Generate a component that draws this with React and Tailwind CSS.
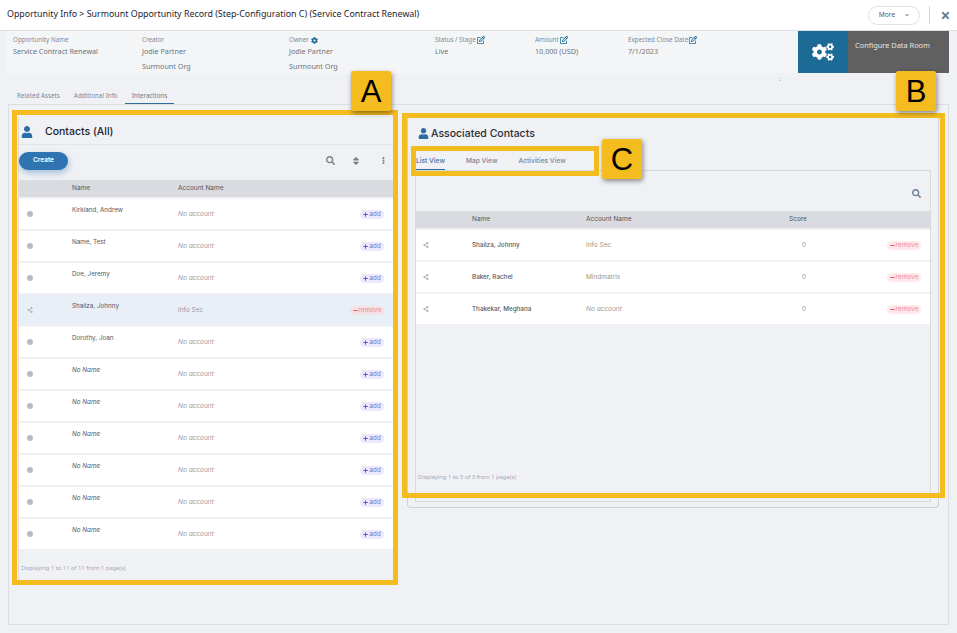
import React from 'react';
import { FaCogs, FaUser, FaSearch, FaEllipsisV, FaSort, FaShareAlt, FaTimes, FaCog, FaPlus, FaMinus, FaChevronDown } from 'react-icons/fa';
import { FaRegPenToSquare } from 'react-icons/fa6';

const plex = 'font-["Noto_Sans",sans-serif]';
const inter = 'font-["Inter",sans-serif]';

const contacts = [
    { name: 'Kirkland, Andrew' },
    { name: 'Name, Test' },
    { name: 'Doe, Jeremy' },
    { name: 'Shailza, Johnny', account: 'Info Sec', linked: true },
    { name: 'Dorothy, Joan' },
    { name: 'No Name' },
    { name: 'No Name' },
    { name: 'No Name' },
    { name: 'No Name' },
    { name: 'No Name' },
    { name: 'No Name' },
];

const associated = [
    { name: 'Shailza, Johnny', account: 'Info Sec' },
    { name: 'Baker, Rachel', account: 'Mindmatrix' },
    { name: 'Thakekar, Meghana' },
];

const AddPill = () => (
    <span className="flex h-[9px] w-[24px] items-center justify-center gap-[1px] rounded-full bg-[#ece9fb] text-[6.5px] leading-[9px] text-[#7a72dc]">
        <FaPlus className="h-[5px] w-[5px] text-[#5b50d6]" /><span>add</span>
    </span>
);

const RemovePill = ({ tint }) => (
    <span className={`flex h-[9px] w-[34px] items-center justify-center gap-[1px] rounded-full text-[6.5px] leading-[9px] text-[#ee8a94] ${tint}`}>
        <FaMinus className="h-[5px] w-[5px] text-[#f0505f]" /><span>remove</span>
    </span>
);

const EditIcon = () => <FaRegPenToSquare className="ml-[1px] inline h-[8px] w-[8px] align-baseline text-[#1e6a94]" />;

const Field = ({ label, icon, value, second }) => (
    <div className={`${plex} text-[#6a7480]`}>
        <div className="flex h-[10px] items-center text-[6.3px] leading-none text-[#7f8a9b]">{label}{icon}</div>
        <div className="mt-[1px] h-[10px] text-[7.2px] leading-[10px]">{value}</div>
        {second && <div className="mt-[5px] h-[10px] text-[7.2px] leading-[10px]">{second}</div>}
    </div>
);

const ContactRow = ({ contact }) => {
    const noName = contact.name === 'No Name';
    return (
        <div className={`mb-[2px] grid h-[30px] grid-cols-[53px_106px_1fr_auto] items-center pr-[9px] ${inter} ${contact.linked ? 'bg-[#e9eff6]' : 'bg-white'}`}>
            <div className="pl-[8px]">
                {contact.linked
                    ? <FaShareAlt className="h-[6px] w-[6px] text-[#b5b8c0]" />
                    : <div className="h-[6px] w-[6px] rounded-full bg-[#b9bcc4]" />}
            </div>
            <div className={`-mt-[7px] text-[6.3px] text-[#55575e] ${noName ? 'italic' : ''}`}>{contact.name}</div>
            <div className={`mt-[1px] text-[6.5px] text-[#9a9ca6] ${contact.account ? '' : 'italic'}`}>{contact.account || 'No account'}</div>
            {contact.linked ? <RemovePill tint="bg-[#f3e1e6]" /> : <AddPill />}
        </div>
    );
};

const AssociatedRow = ({ contact }) => (
    <div className={`mb-[2px] grid h-[30px] grid-cols-[56px_114px_216px_1fr] items-center bg-white pr-[9px] ${inter}`}>
        <div className="pl-[7px]"><FaShareAlt className="h-[6px] w-[6px] text-[#b5b8c0]" /></div>
        <div className="mt-[1px] text-[6.3px] font-medium text-[#55575e]">{contact.name}</div>
        <div className={`mt-[1px] text-[6.5px] ${contact.account ? 'text-[#a09a78]' : 'italic text-[#9a9ca6]'}`}>{contact.account || 'No account'}</div>
        <div className="flex items-center justify-between">
            <span className="mt-[1px] w-[1px] text-[6.5px] text-[#9a9ca6]">0</span>
            <RemovePill tint="bg-[#fde9eb]" />
        </div>
    </div>
);

const Marker = ({ label, className }) => (
    <div className={`absolute flex h-[40px] w-[40px] items-center justify-center rounded-[2px] bg-[#f5bc1f] font-["Liberation_Sans",sans-serif] text-[31px] leading-none text-black shadow-[1px_2px_5px_rgba(0,0,0,0.45)] ${className}`}>
        {label}
    </div>
);

export default function App() {
    return (
        <div className={`relative h-[633px] w-[957px] overflow-hidden bg-[#f0f1f5] ${plex}`}>
            <header className="flex h-[31px] items-center border-b border-[#dcdde3] bg-white pl-[7px] pr-[6px]">
                <h1 className="text-[8.85px] font-normal text-[#1d2530]">Opportunity Info &gt; Surmount Opportunity Record (Step-Configuration C) (Service Contract Renewal)</h1>
                <button className="ml-auto flex h-[19px] w-[52px] items-center justify-center gap-[10px] rounded-full border border-[#dfe1e6] bg-white text-[6.6px] text-[#555c66]">
                    More <FaChevronDown className="h-[4px] w-[4px]" />
                </button>
                <div className="ml-[9px] h-[18px] w-[1px] bg-[#d5d7dc]" />
                <FaTimes className="ml-[10px] h-[11px] w-[11px] text-[#6d7f92]" />
            </header>

            <section className="ml-[6px] mr-[8px] flex h-[42px]">
                <div className="grid flex-1 grid-cols-[129px_147px_146px_100px_93px_1fr] bg-[#f4f5f6] pl-[7px] pt-[4px]">
                    <Field label="Opportunity Name" value="Service Contract Renewal" />
                    <Field label="Creator" value="Jodie Partner" second="Surmount Org" />
                    <Field label={<>Owner<FaCog className="ml-[2px] h-[7px] w-[7px] text-[#1e6a94]" /></>} value="Jodie Partner" second="Surmount Org" />
                    <Field label="Status / Stage" icon={<EditIcon />} value="Live" />
                    <Field label="Amount" icon={<EditIcon />} value="10,000 (USD)" />
                    <Field label="Expected Close Date" icon={<EditIcon />} value="7/1/2023" />
                </div>
                <div className="flex w-[50px] items-center justify-center bg-[#1c6a96]">
                    <FaCogs className="h-[22px] w-[22px] text-white" />
                </div>
                <div className="w-[101px] bg-[#606060] pl-[7px] pt-[9px] text-[7.4px] leading-[10px] text-[#e4e4e4]">Configure Data Room</div>
            </section>

            <nav className="ml-[8px] mt-[14px] flex h-[17px] items-end text-[6.3px] text-[#7e8894]">
                <div className="flex h-[16px] items-center px-[9px]">Related Assets</div>
                <div className="ml-[-4px] flex h-[16px] items-center px-[9px]">Additional Info</div>
                <div className="ml-[-2px] flex h-[16px] items-center border-b border-[#2f6d9e] px-[7px] text-[#6f7986]">Interactions</div>
            </nav>

            <main className="mx-[8px] flex h-[521px] items-start border border-[#dcdee2]">
                <section className="ml-[9px] mt-[12px] flex h-[464px] w-[375px] flex-col rounded-b-[3px] border-l border-[#d7d9dd]">
                    <div className="flex h-[28px] items-center border-b border-[#e2e4e8] pl-[2px] pt-[2px]">
                        <FaUser className="h-[12px] w-[12px] text-[#2c6ca6]" />
                        <h2 className={`ml-[12px] text-[10.5px] font-medium text-[#20242c] ${inter}`}>Contacts (All)</h2>
                    </div>
                    <div className="flex h-[35px] items-center pb-[4px] pr-[6px]">
                        <button className={`h-[18px] w-[49px] rounded-full bg-[#2f73b0] text-[6.5px] font-semibold text-white shadow-[1px_3px_6px_rgba(47,115,176,0.4)] ${inter}`}>Create</button>
                        <FaSearch className="ml-auto h-[9px] w-[9px] text-[#7a7f88]" />
                        <FaSort className="ml-[16px] mr-[1px] h-[10px] w-[10px] text-[#7a7f88]" />
                        <FaEllipsisV className="ml-[18px] h-[7px] w-[7px] text-[#7a7f88]" />
                    </div>
                    <div className={`mb-[2px] grid h-[17px] grid-cols-[53px_106px_1fr] items-center rounded-t-[2px] bg-[#d9dbe0] text-[6.5px] text-[#53565e] ${inter}`}>
                        <div />
                        <div>Name</div>
                        <div>Account Name</div>
                    </div>
                    {contacts.map((c, i) => <ContactRow key={i} contact={c} />)}
                    <div className="ml-[2px] mt-[13px] text-[5.8px] text-[#a5a7b8]">Displaying 1 to 11 of 11 from 1 page(s)</div>
                </section>

                <section className="ml-[14px] mt-[12px] flex h-[391px] w-[532px] flex-col rounded-b-[4px] border-b border-l border-r border-[#cfd1d5]">
                    <div className="flex h-[32px] items-center pl-[10px] pt-[1px]">
                        <FaUser className="h-[11px] w-[11px] text-[#2c6ca6]" />
                        <h2 className={`ml-[2px] text-[10.5px] font-medium text-[#2a2e36] ${inter}`}>Associated Contacts</h2>
                    </div>
                    <div className={`ml-[8px] mt-[8px] flex h-[13px] gap-[21px] text-[6.6px] font-semibold text-[#8a8fa3] ${inter}`}>
                        <span className="border-b border-[#2f6d9e] text-[#5b7ea8]">List View</span>
                        <span>Map View</span>
                        <span>Activities View</span>
                    </div>
                    <div className="mx-[7px] mb-[5px] flex flex-1 flex-col border border-[#d7d9dd]">
                        <div className="flex h-[40px] items-center justify-end pr-[9px] pt-[4px]">
                            <FaSearch className="h-[9px] w-[9px] text-[#6d7f96]" />
                        </div>
                        <div className={`mb-[2px] grid h-[17px] grid-cols-[56px_114px_203px_1fr] items-center bg-[#d9dbe0] pt-[1px] text-[6.5px] text-[#53565e] ${inter}`}>
                            <div />
                            <div>Name</div>
                            <div>Account Name</div>
                            <div>Score</div>
                        </div>
                        {associated.map((c, i) => <AssociatedRow key={i} contact={c} />)}
                        <div className="ml-[2px] mt-[147px] text-[5.8px] text-[#a5a7b8]">Displaying 1 to 3 of 3 from 1 page(s)</div>
                    </div>
                </section>
            </main>

            {/* callouts sit on top of the page */}
            <div className="absolute left-[12px] top-[110px] h-[475px] w-[386px] border-[5px] border-[#f5bc1f]" />
            <div className="absolute left-[402px] top-[113px] h-[385px] w-[543px] border-[5px] border-[#f5bc1f]" />
            <div className="absolute left-[411px] top-[146px] h-[30px] w-[188px] border-[5px] border-[#f5bc1f]" />
            <Marker label="A" className="left-[351px] top-[71px]" />
            <Marker label="B" className="left-[896px] top-[71px]" />
            <Marker label="C" className="left-[602px] top-[139px]" />
            <div className="absolute left-[779px] top-[76px] text-[6px] leading-none text-[#666]">:</div>
        </div>
    );
}
